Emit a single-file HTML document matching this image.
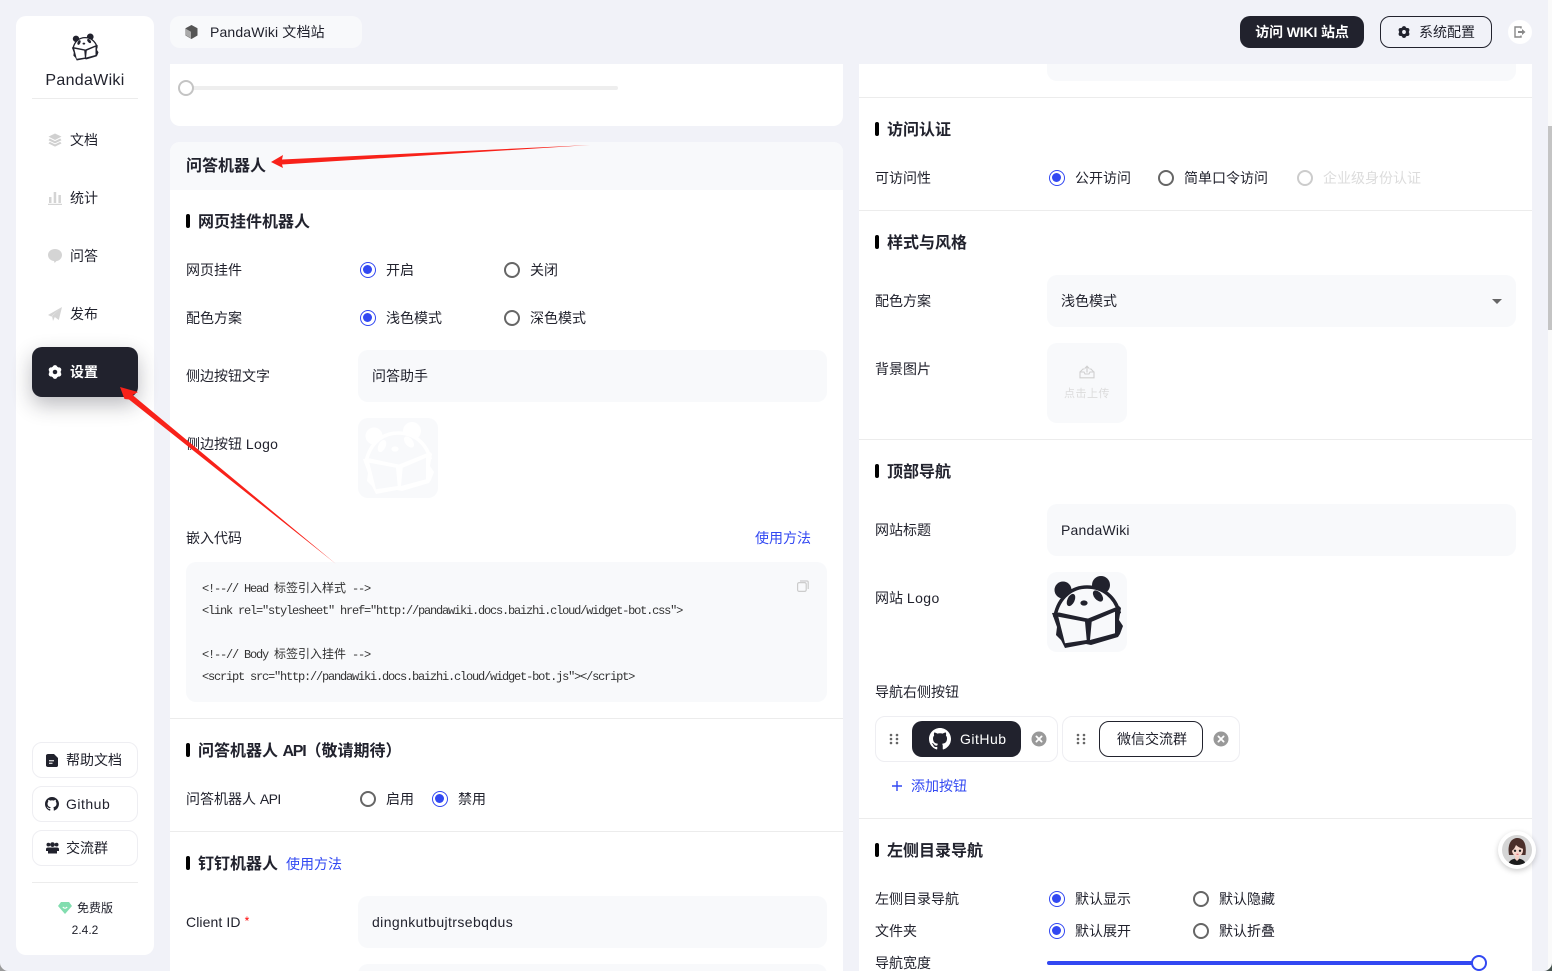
<!DOCTYPE html>
<html lang="zh-CN"><head><meta charset="utf-8"><title>PandaWiki</title>
<style>
html,body{margin:0;padding:0;width:1552px;height:971px;overflow:hidden;background:#f1f2f8}
body{position:relative;font-family:"Liberation Sans","Noto Sans CJK SC",sans-serif;font-size:14px;color:#21222d}
div,span,svg{position:absolute;box-sizing:border-box}
.t{line-height:20px;height:20px;white-space:nowrap}
.b{font-weight:700;font-size:16px;margin-top:2px}
.bar{width:4px;height:14px;border-radius:2px;background:#000}
.in{background:#f8f9fb;border-radius:10px}
.hr{height:1px;background:#ececec}
.r{width:16px;height:16px;border-radius:50%;border:2px solid #666;background:#fff}
.r.on{border:1.5px solid #3248f2}
.r.on:after{content:"";position:absolute;left:2px;top:2px;width:9px;height:9px;border-radius:50%;background:#3248f2}
.r.off{border-color:#ccc}
.blue{color:#3248f2}
.side{left:32px;width:106px;height:36px;border:1px solid #eeeef2;border-radius:10px;background:#fff}
.code{font-family:"Liberation Mono","Noto Sans CJK SC",monospace;font-size:12px;letter-spacing:-1.2px;white-space:pre;line-height:20px;left:202px;color:#333}
.code i{font-style:normal;letter-spacing:0;font-family:"Noto Sans CJK SC",sans-serif}
.s{position:static}
</style></head>
<body>
<svg width="0" height="0" style="left:0;top:0">
<defs>
<symbol id="panda" viewBox="0 0 80 80">
<circle cx="16" cy="18" r="8.5" style="fill:var(--a)"/><circle cx="54" cy="13" r="9" style="fill:var(--a)"/>
<path d="M8 44C12 24 26 15 40 15C56 15 68 25 72 40L44 52L12 48Z" style="fill:var(--b);stroke:var(--a)" stroke-width="3.5"/>
<ellipse cx="24" cy="28" rx="3.6" ry="6.5" transform="rotate(25 24 28)" style="fill:var(--a)"/>
<ellipse cx="51" cy="24" rx="3.8" ry="6.5" transform="rotate(-40 51 24)" style="fill:var(--a)"/>
<ellipse cx="37" cy="31" rx="3.6" ry="2.6" style="fill:var(--a)"/>
<path d="M5 41L12 40.500L38 46L41 46.500L72 34L74 36L72 48L76 54L73 62L71 65L44 73L39 72L18 76L14 68L9 63L10 55Z" style="fill:var(--a)"/>
<path d="M11.300 44.700L38 49.700L39.700 68L18 71.300ZM44.700 49.700L68 39.700L68 61.300L43 68Z" style="fill:var(--b)"/>
</symbol>
<symbol id="gh" viewBox="0 0 16 16"><path fill="currentColor" d="M8 0C3.58 0 0 3.58 0 8c0 3.54 2.29 6.53 5.47 7.59.4.07.55-.17.55-.38 0-.19-.01-.82-.01-1.49-2.01.37-2.53-.49-2.69-.94-.09-.23-.48-.94-.82-1.13-.28-.15-.68-.52-.01-.53.63-.01 1.08.58 1.23.82.72 1.21 1.87.87 2.33.66.07-.52.28-.87.51-1.07-1.78-.2-3.64-.89-3.64-3.95 0-.87.31-1.59.82-2.15-.08-.2-.36-1.02.08-2.12 0 0 .67-.21 2.2.82.64-.18 1.32-.27 2-.27.68 0 1.36.09 2 .27 1.53-1.04 2.2-.82 2.2-.82.44 1.1.16 1.92.08 2.12.51.56.82 1.27.82 2.15 0 3.07-1.87 3.75-3.65 3.95.29.25.54.73.54 1.48 0 1.07-.01 1.93-.01 2.2 0 .21.15.46.55.38A8.013 8.013 0 0016 8c0-4.42-3.58-8-8-8z"/></symbol>
<symbol id="gear" viewBox="0 0 14 14"><g fill="currentColor"><circle cx="7" cy="2.400" r="2.300"/><circle cx="7" cy="11.600" r="2.300"/><circle cx="3" cy="4.700" r="2.300"/><circle cx="11" cy="4.700" r="2.300"/><circle cx="3" cy="9.300" r="2.300"/><circle cx="11" cy="9.300" r="2.300"/></g><circle cx="7" cy="7" r="4" fill="none" stroke="currentColor" stroke-width="3.400"/></symbol>
<symbol id="drag" viewBox="0 0 10 12"><g fill="#666"><circle cx="2" cy="2" r="1.3"/><circle cx="8" cy="2" r="1.3"/><circle cx="2" cy="6" r="1.3"/><circle cx="8" cy="6" r="1.3"/><circle cx="2" cy="10" r="1.3"/><circle cx="8" cy="10" r="1.3"/></g></symbol>
<symbol id="x" viewBox="0 0 16 16"><circle cx="8" cy="8" r="7.5" fill="#999"/><path d="M5.4 5.4L10.6 10.6M10.6 5.4L5.4 10.6" stroke="#fff" stroke-width="1.8" stroke-linecap="round"/></symbol>
</defs></svg>

<!-- sidebar -->
<div style="left:16px;top:16px;width:138px;height:939px;background:#fff;border-radius:10px"></div>
<svg style="left:70px;top:31.5px;--a:#21222d;--b:#fff" width="30" height="30"><use href="#panda"/></svg>
<div class="t" style="left:16px;width:138px;text-align:center;top:71px;font-size:16px;letter-spacing:.3px">PandaWiki</div>
<div class="hr" style="left:32px;top:98px;width:106px"></div>

<svg style="left:48px;top:133px" width="14" height="14" viewBox="0 0 14 14"><g fill="#d0d0d0"><path d="M7 .5L13.5 3.600L7 7L.5 3.600Z"/><path d="M1.800 5.500L7 8.100L12.200 5.500L13.500 7.200L7 10.400L.5 7.200Z"/><path d="M1.800 8.900L7 11.400L12.200 8.900L13.500 10.400L7 13.600L.5 10.400Z"/></g></svg>
<div class="t" style="left:70px;top:130px">文档</div>
<svg style="left:48px;top:191px" width="14" height="14" viewBox="0 0 14 14"><g fill="#d4d4d4"><rect x="1" y="6" width="2.500" height="6"/><rect x="5.700" y="1" width="2.500" height="11"/><rect x="10.400" y="4" width="2.500" height="8"/><rect x="0" y="12.800" width="14" height="1.200"/></g></svg>
<div class="t" style="left:70px;top:188px">统计</div>
<svg style="left:48px;top:249px" width="14" height="14" viewBox="0 0 14 14"><path fill="#d4d4d4" d="M7 0C11 0 14 2.600 14 6C14 9.400 11 12 8.500 12L6.600 14L6 12C3 11.800 0 9.400 0 6C0 2.600 3 0 7 0Z"/></svg>
<div class="t" style="left:70px;top:246px">问答</div>
<svg style="left:48px;top:307px" width="14" height="14" viewBox="0 0 14 14"><path fill="#d4d4d4" d="M14 0L10.800 13L6.800 10L5 14L4 8.800ZM14 0L0 8L3.400 9.600Z"/></svg>
<div class="t" style="left:70px;top:304px">发布</div>

<div style="left:32px;top:347px;width:106px;height:50px;background:#21222d;border-radius:10px;box-shadow:0 8px 20px rgba(33,34,45,.3)"></div>
<svg style="left:48px;top:365px;color:#fff" width="14" height="14"><use href="#gear"/></svg>
<div class="t" style="left:70px;top:362px;color:#fff;font-weight:700">设置</div>

<div class="side" style="top:742px"></div>
<svg style="left:46px;top:754px" width="12" height="13" viewBox="0 0 12 13"><path fill="#21222d" d="M2 0H8L12 4V11.500C12 12.300 11.300 13 10.500 13H2C1 13 0 12.300 0 11.500V1.500C0 .7 1 0 2 0Z"/><rect x="3" y="6.200" width="5" height="1.100" fill="#fff"/><rect x="3" y="8.700" width="3.500" height="1.100" fill="#fff"/></svg>
<div class="t" style="left:66px;top:750px">帮助文档</div>
<div class="side" style="top:786px"></div>
<svg style="left:45px;top:797px;color:#21222d" width="14" height="14"><use href="#gh"/></svg>
<div class="t" style="left:66px;top:794px;letter-spacing:.5px">Github</div>
<div class="side" style="top:830px"></div>
<svg style="left:46px;top:842px" width="13" height="12" viewBox="0 0 13 12"><g fill="#21222d"><circle cx="2.400" cy="2.600" r="1.900"/><circle cx="10.600" cy="2.600" r="1.900"/><circle cx="6.500" cy="2.600" r="2.400"/><path d="M0 7C0 6 1 5.500 2 5.500H11C12 5.500 13 6 13 7V9H11V11.500H2V9H0Z"/></g></svg>
<div class="t" style="left:66px;top:838px">交流群</div>
<div class="hr" style="left:32px;top:882px;width:106px"></div>
<svg style="left:58px;top:902px" width="14" height="12" viewBox="0 0 14 12"><path fill="#82ddaf" d="M3 0H11L14 4L7 12L0 4Z"/><path d="M4.800 5Q7 7.500 9.200 5" stroke="#fff" stroke-width="1.100" fill="none"/></svg>
<div class="t" style="left:77px;top:898px;font-size:12px">免费版</div>
<div class="t" style="left:16px;width:138px;text-align:center;top:920px;font-size:12px">2.4.2</div>

<!-- header -->
<div style="left:170px;top:16px;width:192px;height:32px;background:#f8f9fb;border-radius:10px"></div>
<svg style="left:185px;top:25px" width="13" height="14" viewBox="0 0 13 14"><path fill="#555" d="M6.500 0L12.500 3.300V10.500L6.500 14L.5 10.500V3.300Z"/><path fill="#aaa" d="M.8 3.800L6 6.800V13.400L.8 10.300Z"/></svg>
<div class="t" style="left:210px;top:22px;letter-spacing:.15px">PandaWiki 文档站</div>
<div style="left:1240px;top:16px;width:124px;height:32px;background:#21222d;border-radius:10px"></div>
<div class="t" style="left:1240px;width:124px;text-align:center;top:22px;color:#fff;font-weight:700;letter-spacing:-.15px">访问 WIKI 站点</div>
<div style="left:1380px;top:16px;width:112px;height:32px;border:1px solid #21222d;border-radius:10px"></div>
<svg style="left:1398px;top:26px;color:#21222d" width="12" height="12"><use href="#gear"/></svg>
<div class="t" style="left:1419px;top:22px">系统配置</div>
<div style="left:1508px;top:20px;width:24px;height:24px;background:#fff;border-radius:50%"></div>
<svg style="left:1514px;top:26px" width="12" height="12" viewBox="0 0 12 12"><path d="M7 2.500V1H1V11H7V9.500" stroke="#888" stroke-width="1.400" fill="none"/><path d="M4 5H8V3L11.500 6L8 9V7H4Z" fill="#888"/></svg>

<!-- left panel -->
<div style="left:170px;top:64px;width:673px;height:62px;background:#fff;border-radius:0 0 10px 10px"></div>
<div style="left:190px;top:86px;width:428px;height:4px;background:#eee;border-radius:2px"></div>
<div style="left:178px;top:80px;width:16px;height:16px;border-radius:50%;background:#fff;border:2px solid #c4c4c4"></div>

<div style="left:170px;top:142px;width:673px;height:829px;background:#fff;border-radius:10px 10px 0 0"></div>
<div style="left:170px;top:142px;width:673px;height:48px;background:#f8f9fb;border-radius:10px 10px 0 0"></div>
<div class="t b" style="left:186px;top:155px">问答机器人</div>
<div class="bar" style="left:186px;top:214px"></div>
<div class="t b" style="left:198px;top:211px">网页挂件机器人</div>

<div class="t" style="left:186px;top:260px">网页挂件</div>
<div class="r on" style="left:360px;top:262px"></div><div class="t" style="left:386px;top:260px">开启</div>
<div class="r" style="left:504px;top:262px"></div><div class="t" style="left:530px;top:260px">关闭</div>

<div class="t" style="left:186px;top:308px">配色方案</div>
<div class="r on" style="left:360px;top:310px"></div><div class="t" style="left:386px;top:308px">浅色模式</div>
<div class="r" style="left:504px;top:310px"></div><div class="t" style="left:530px;top:308px">深色模式</div>

<div class="t" style="left:186px;top:366px">侧边按钮文字</div>
<div class="in" style="left:358px;top:350px;width:469px;height:52px"></div>
<div class="t" style="left:372px;top:366px">问答助手</div>

<div class="t" style="left:186px;top:434px">侧边按钮 <span class="s" style="letter-spacing:.3px">Logo</span></div>
<div class="in" style="left:358px;top:418px;width:80px;height:80px"></div>
<svg style="left:358px;top:418px;--a:#fff;--b:#f8f9fb" width="80" height="80"><use href="#panda"/></svg>

<div class="t" style="left:186px;top:528px">嵌入代码</div>
<div class="t blue" style="left:755px;top:528px">使用方法</div>
<div class="in" style="left:186px;top:562px;width:641px;height:140px"></div>
<div class="code" style="top:578px">&lt;!--// Head <i>标签引入样式</i> --&gt;</div>
<div class="code" style="top:601px">&lt;link rel="stylesheet" href="http://pandawiki.docs.baizhi.cloud/widget-bot.css"&gt;</div>
<div class="code" style="top:644px">&lt;!--// Body <i>标签引入挂件</i> --&gt;</div>
<div class="code" style="top:667px">&lt;script src="http://pandawiki.docs.baizhi.cloud/widget-bot.js"&gt;&lt;/script&gt;</div>
<svg style="left:797px;top:580px" width="12" height="12" viewBox="0 0 12 12"><rect x=".6" y="2.600" width="8.600" height="8.800" rx="1.500" fill="none" stroke="#ccc" stroke-width="1.200"/><path d="M3 1H10C10.700 1 11.200 1.500 11.200 2.200V9" fill="none" stroke="#ccc" stroke-width="1.200"/></svg>

<div class="hr" style="left:170px;top:718px;width:673px"></div>
<div class="bar" style="left:186px;top:743px"></div>
<div class="t b" style="left:198px;top:740px">问答机器人 <span class="s" style="letter-spacing:-1.200px">API</span>（敬请期待）</div>
<div class="t" style="left:186px;top:789px">问答机器人 <span class="s" style="letter-spacing:-.6px">API</span></div>
<div class="r" style="left:360px;top:791px"></div><div class="t" style="left:386px;top:789px">启用</div>
<div class="r on" style="left:432px;top:791px"></div><div class="t" style="left:458px;top:789px">禁用</div>
<div class="hr" style="left:170px;top:831px;width:673px"></div>
<div class="bar" style="left:186px;top:856px"></div>
<div class="t b" style="left:198px;top:853px">钉钉机器人</div>
<div class="t blue" style="left:286px;top:854px">使用方法</div>
<div class="t" style="left:186px;top:911px;letter-spacing:.1px">Client ID <span class="s" style="color:#f00;font-size:12px;vertical-align:2px">*</span></div>
<div class="in" style="left:358px;top:896px;width:469px;height:52px"></div>
<div class="t" style="left:372px;top:912px;letter-spacing:.4px">dingnkutbujtrsebqdus</div>
<div class="in" style="left:358px;top:964px;width:469px;height:52px"></div>

<!-- right panel -->
<div style="left:859px;top:64px;width:673px;height:907px;background:#fff"></div>
<div style="left:1047px;top:64px;width:469px;height:17px;background:#f8f9fb;border-radius:0 0 10px 10px"></div>
<div class="hr" style="left:859px;top:97px;width:673px"></div>
<div class="bar" style="left:875px;top:122px"></div>
<div class="t b" style="left:887px;top:119px">访问认证</div>
<div class="t" style="left:875px;top:168px">可访问性</div>
<div class="r on" style="left:1049px;top:170px"></div><div class="t" style="left:1075px;top:168px">公开访问</div>
<div class="r" style="left:1158px;top:170px"></div><div class="t" style="left:1184px;top:168px">简单口令访问</div>
<div class="r off" style="left:1297px;top:170px"></div><div class="t" style="left:1323px;top:168px;color:#dcdcdc">企业级身份认证</div>
<div class="hr" style="left:859px;top:210px;width:673px"></div>

<div class="bar" style="left:875px;top:235px"></div>
<div class="t b" style="left:887px;top:232px">样式与风格</div>
<div class="t" style="left:875px;top:291px">配色方案</div>
<div class="in" style="left:1047px;top:275px;width:469px;height:52px"></div>
<div class="t" style="left:1061px;top:291px">浅色模式</div>
<svg style="left:1492px;top:299px" width="10" height="5" viewBox="0 0 10 5"><path d="M0 0H10L5 5Z" fill="#666"/></svg>
<div class="t" style="left:875px;top:359px">背景图片</div>
<div class="in" style="left:1047px;top:343px;width:80px;height:80px"></div>
<svg style="left:1079px;top:365px" width="16" height="14" viewBox="0 0 16 14"><path d="M1 7L4 4H5.500M14.800 7L12 4H10.500M1 7V12.800H15V7H11L10 9H6L5 7Z" fill="none" stroke="#d0d0d0" stroke-width="1.100"/><path d="M8 7.500V1.500M5.800 3.500L8 1.200L10.200 3.500" fill="none" stroke="#d0d0d0" stroke-width="1.200"/></svg>
<div class="t" style="left:1047px;width:80px;text-align:center;top:384px;font-size:11px;color:#dcdcdc;letter-spacing:.5px">点击上传</div>
<div class="hr" style="left:859px;top:439px;width:673px"></div>

<div class="bar" style="left:875px;top:464px"></div>
<div class="t b" style="left:887px;top:461px">顶部导航</div>
<div class="t" style="left:875px;top:520px">网站标题</div>
<div class="in" style="left:1047px;top:504px;width:469px;height:52px"></div>
<div class="t" style="left:1061px;top:520px;letter-spacing:.2px">PandaWiki</div>
<div class="t" style="left:875px;top:588px">网站 <span class="s" style="letter-spacing:.4px">Logo</span></div>
<div class="in" style="left:1047px;top:572px;width:80px;height:80px"></div>
<svg style="left:1047px;top:572px;--a:#21222d;--b:#f8f9fb" width="80" height="80"><use href="#panda"/></svg>
<div class="t" style="left:875px;top:682px">导航右侧按钮</div>

<div style="left:875px;top:716px;width:183px;height:46px;border:1px solid #eeeef2;border-radius:10px"></div>
<svg style="left:889px;top:733px" width="10" height="12"><use href="#drag"/></svg>
<div style="left:912px;top:721px;width:109px;height:36px;background:#21222d;border-radius:10px"></div>
<svg style="left:929px;top:728px;color:#fff" width="22" height="22"><use href="#gh"/></svg>
<div class="t" style="left:960px;top:729px;color:#fff;letter-spacing:.5px">GitHub</div>
<svg style="left:1031px;top:731px" width="16" height="16"><use href="#x"/></svg>

<div style="left:1062px;top:716px;width:178px;height:46px;border:1px solid #eeeef2;border-radius:10px"></div>
<svg style="left:1076px;top:733px" width="10" height="12"><use href="#drag"/></svg>
<div style="left:1099px;top:721px;width:104px;height:36px;border:1px solid #21222d;border-radius:10px"></div>
<div class="t" style="left:1117px;top:729px">微信交流群</div>
<svg style="left:1213px;top:731px" width="16" height="16"><use href="#x"/></svg>

<svg style="left:892px;top:781px" width="10" height="10" viewBox="0 0 10 10"><path d="M5 0V10M0 5H10" stroke="#3248f2" stroke-width="1.400"/></svg>
<div class="t blue" style="left:911px;top:776px">添加按钮</div>
<div class="hr" style="left:859px;top:818px;width:673px"></div>

<div class="bar" style="left:875px;top:843px"></div>
<div class="t b" style="left:887px;top:840px">左侧目录导航</div>
<div class="t" style="left:875px;top:889px">左侧目录导航</div>
<div class="r on" style="left:1049px;top:891px"></div><div class="t" style="left:1075px;top:889px">默认显示</div>
<div class="r" style="left:1193px;top:891px"></div><div class="t" style="left:1219px;top:889px">默认隐藏</div>
<div class="t" style="left:875px;top:921px">文件夹</div>
<div class="r on" style="left:1049px;top:923px"></div><div class="t" style="left:1075px;top:921px">默认展开</div>
<div class="r" style="left:1193px;top:923px"></div><div class="t" style="left:1219px;top:921px">默认折叠</div>
<div class="t" style="left:875px;top:953px">导航宽度</div>
<div style="left:1047px;top:961px;width:432px;height:4px;background:#3248f2;border-radius:2px"></div>
<div style="left:1471px;top:955px;width:16px;height:16px;border-radius:50%;background:#fff;border:2px solid #3248f2"></div>

<!-- avatar -->
<div style="left:1498px;top:831px;width:38px;height:38px;border-radius:50%;background:#fff;box-shadow:0 2px 6px rgba(0,0,0,.2)"></div>
<svg style="left:1502px;top:835px" width="30" height="30" viewBox="0 0 30 30"><defs><clipPath id="av"><circle cx="15" cy="15" r="15"/></clipPath></defs><g clip-path="url(#av)"><rect width="30" height="30" fill="#d5d5d5"/><path d="M6 30C7 25 11 23.500 15 23.500C19 23.500 23 25 24 30Z" fill="#1c1c1c"/><path d="M13 19H17V24L15 26L13 24Z" fill="#f3cfc4"/><path d="M7 20C5 8 10 3 15.500 3C21 3 25 8 23.500 20Z" fill="#4b2f2a"/><ellipse cx="15.500" cy="15" rx="5.500" ry="6.500" fill="#f6d8cd"/><path d="M9.500 16C9.500 11 12 8.500 16 7C19 8 21 10.500 21.500 14C18 13 15.500 11.500 14 10C13 12.500 11.500 15 9.500 16Z" fill="#4b2f2a"/><circle cx="13" cy="15.800" r="1.200" fill="#222"/><circle cx="18" cy="15.800" r="1.200" fill="#222"/><path d="M14.500 19.200H16.500" stroke="#d56" stroke-width="1"/></g></svg>

<!-- scrollbar -->
<div style="left:1548px;top:0;width:4px;height:971px;background:#fafafa"></div>
<div style="left:1548px;top:126px;width:4px;height:204px;background:#c4c4c4"></div>

<!-- red arrows -->
<svg style="left:0;top:0" width="1552" height="971" viewBox="0 0 1552 971">
<path fill="#f8221a" d="M271 162L283 155L282 159.500L590 145L282 164.500L283 168Z"/>
<path fill="#f8221a" d="M120 387L138 392L132.500 395L336 564L129 399.500L124.500 399Z"/>
</svg>

<!-- window corners -->
<svg style="left:1544px;top:963px" width="8" height="8" viewBox="0 0 8 8"><path d="M8 0V8H0C4 8 8 4 8 0Z" fill="#46534f"/></svg>
<svg style="left:0;top:963px" width="8" height="8" viewBox="0 0 8 8"><path d="M0 0V8H8C4 8 0 4 0 0Z" fill="#9a9a9a"/></svg>
</body></html>
